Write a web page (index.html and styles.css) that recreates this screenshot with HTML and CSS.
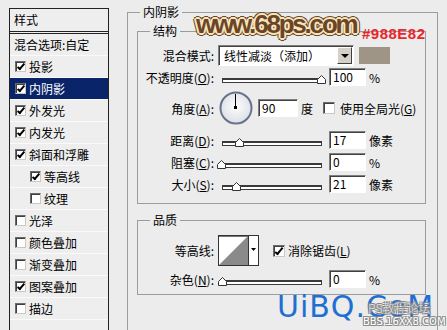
FILE: index.html
```html
<!DOCTYPE html>
<html lang="zh-CN">
<head>
    <meta charset="UTF-8">
    <title>图层样式 - 内阴影</title>
    <link rel="stylesheet" href="styles.css">
</head>
<body>
<div class="dialog">
    <div class="style-list">
        <div class="list-head">样式</div>
        <div class="list-item blend">混合选项:自定</div>
        <div class="list-item"><span class="chk on"></span>投影</div>
        <div class="list-item active"><span class="chk on"></span>内阴影</div>
        <div class="list-item"><span class="chk on"></span>外发光</div>
        <div class="list-item"><span class="chk on"></span>内发光</div>
        <div class="list-item"><span class="chk on"></span>斜面和浮雕</div>
        <div class="list-item sub"><span class="chk on"></span>等高线</div>
        <div class="list-item sub"><span class="chk"></span>纹理</div>
        <div class="list-item"><span class="chk"></span>光泽</div>
        <div class="list-item"><span class="chk"></span>颜色叠加</div>
        <div class="list-item"><span class="chk"></span>渐变叠加</div>
        <div class="list-item"><span class="chk on"></span>图案叠加</div>
        <div class="list-item"><span class="chk"></span>描边</div>
    </div>

    <div class="settings">
        <fieldset class="group outer">
            <legend>内阴影</legend>

            <fieldset class="group struct">
                <legend>结构</legend>
                <div class="row mode">
                    <span class="lbl">混合模式:</span>
                    <div class="select">
                        <span class="select-text">线性减淡（添加）</span>
                        <span class="select-btn"></span>
                    </div>
                    <span class="swatch"></span>
                </div>
                <div class="row opacity">
                    <span class="lbl">不透明度(<u>O</u>):</span>
                    <div class="slider">
                        <div class="track"></div>
                        <svg class="thumb" style="left: 95px" width="9" height="9" viewBox="0 0 9 9"><polygon points="0.5,8.5 0.5,4.5 4.5,0.5 8.5,4.5 8.5,8.5" fill="#fff" stroke="#333"/></svg>
                    </div>
                    <span class="field">100</span>
                    <span class="unit">%</span>
                </div>
                <div class="row angle">
                    <span class="lbl">角度(<u>A</u>):</span>
                    <svg class="dial" width="34" height="34" viewBox="0 0 34 34">
                        <defs>
                            <radialGradient id="dialFill" cx="50%" cy="45%" r="55%">
                                <stop offset="0" stop-color="#fdfdfd"/>
                                <stop offset="1" stop-color="#dcdfe5"/>
                            </radialGradient>
                        </defs>
                        <circle cx="17" cy="17" r="15.5" fill="url(#dialFill)" stroke="#66738a" stroke-width="2"/>
                        <line x1="16.5" y1="3" x2="16.5" y2="17" stroke="#000"/>
                        <rect x="15" y="15" width="3" height="3" fill="#000"/>
                    </svg>
                    <span class="field">90</span>
                    <span class="unit">度</span>
                    <span class="chk big global"></span>
                    <span class="chk-label">使用全局光(<u>G</u>)</span>
                </div>
                <div class="row">
                    <span class="lbl">距离(<u>D</u>):</span>
                    <div class="slider">
                        <div class="track"></div>
                        <svg class="thumb" style="left: 13px" width="9" height="9" viewBox="0 0 9 9"><polygon points="0.5,8.5 0.5,4.5 4.5,0.5 8.5,4.5 8.5,8.5" fill="#fff" stroke="#333"/></svg>
                    </div>
                    <span class="field">17</span>
                    <span class="unit">像素</span>
                </div>
                <div class="row">
                    <span class="lbl">阻塞(<u>C</u>):</span>
                    <div class="slider">
                        <div class="track"></div>
                        <svg class="thumb" style="left: -5px" width="9" height="9" viewBox="0 0 9 9"><polygon points="0.5,8.5 0.5,4.5 4.5,0.5 8.5,4.5 8.5,8.5" fill="#fff" stroke="#333"/></svg>
                    </div>
                    <span class="field">0</span>
                    <span class="unit">%</span>
                </div>
                <div class="row">
                    <span class="lbl">大小(<u>S</u>):</span>
                    <div class="slider">
                        <div class="track"></div>
                        <svg class="thumb" style="left: 10px" width="9" height="9" viewBox="0 0 9 9"><polygon points="0.5,8.5 0.5,4.5 4.5,0.5 8.5,4.5 8.5,8.5" fill="#fff" stroke="#333"/></svg>
                    </div>
                    <span class="field">21</span>
                    <span class="unit">像素</span>
                </div>
            </fieldset>

            <fieldset class="group quality">
                <legend>品质</legend>
                <div class="row contour-row">
                    <span class="lbl">等高线:</span>
                    <svg class="contour" width="41" height="31" viewBox="0 0 41 31">
                        <rect x="0.5" y="0.5" width="30" height="30" fill="#fff" stroke="#333"/>
                        <line x1="1" y1="1.5" x2="30" y2="1.5" stroke="#777"/>
                        <polygon points="1,30 30,1 30,30" fill="#8a8a8a"/>
                        <rect x="30.5" y="0.5" width="10" height="30" fill="#fff" stroke="#333"/>
                        <polygon points="33,13 38,13 35.5,16" fill="#000"/>
                    </svg>
                    <span class="chk big on aa"></span>
                    <span class="chk-label">消除锯齿(<u>L</u>)</span>
                </div>
                <div class="row">
                    <span class="lbl">杂色(<u>N</u>):</span>
                    <div class="slider">
                        <div class="track"></div>
                        <svg class="thumb" style="left: -4px" width="9" height="9" viewBox="0 0 9 9"><polygon points="0.5,8.5 0.5,4.5 4.5,0.5 8.5,4.5 8.5,8.5" fill="#fff" stroke="#333"/></svg>
                    </div>
                    <span class="field">0</span>
                    <span class="unit">%</span>
                </div>
            </fieldset>
        </fieldset>
    </div>

    <!-- 水印 -->
    <div class="mark mark-68">www.68ps.com</div>
    <div class="mark mark-hex">#988E82</div>
    <div class="mark mark-uibq">UiBQ.CoM</div>
    <div class="mark mark-bbs">PS教程论坛</div>
    <div class="mark mark-bbs-url">BBS.16XX8.COM</div>
</div>
</body>
</html>
```

FILE: styles.css
```css
body {
    margin: 0;
    background-color: #ececec;
    font-family: "Noto Sans CJK SC", "Liberation Sans", sans-serif;
    font-size: 12px;
    color: #000;
    overflow: hidden;
}
.dialog {
    position: relative;
    display: flex;
    align-items: flex-start;
    height: 330px;
    padding: 5px 0 0 9px;
    box-sizing: border-box;
    overflow: hidden;
}

/* 左侧样式列表 */
.style-list {
    width: 100px;
    height: 340px;
    margin-top: 3px;
    border: 1px solid #222;
    box-sizing: border-box;
    background-color: #eeeeee;
    flex-shrink: 0;
}
.list-head {
    height: 22px;
    line-height: 22px;
    padding-left: 4px;
    border-bottom: 3px double #222;
}
.list-item {
    display: flex;
    align-items: center;
    height: 21px;
    padding-left: 5px;
    border-bottom: 1px solid #fafafa;
    white-space: nowrap;
}
.list-item.blend {
    padding-left: 4px;
}
.list-item.sub {
    padding-left: 20px;
}
.list-item.active {
    background-color: #0a246a;
    color: #fff;
}

/* 复选框 */
.chk {
    position: relative;
    width: 11px;
    height: 11px;
    box-sizing: border-box;
    border: 1px solid;
    border-color: #6a6a6a #c8c8c8 #c8c8c8 #6a6a6a;
    box-shadow: inset 1px 1px 0 #404040;
    background-color: #fff;
    margin-right: 3px;
    flex-shrink: 0;
}
.chk.on::after {
    content: "";
    position: absolute;
    left: 3px;
    top: 0;
    width: 2px;
    height: 6px;
    border: solid #000;
    border-width: 0 2px 2px 0;
    transform: rotate(40deg);
}
.chk.big {
    width: 12px;
    height: 12px;
}
.chk.big.on::after {
    left: 3px;
    top: 0;
    height: 7px;
}
.chk.global {
    margin-left: 10px;
    margin-right: 5px;
}
.chk.aa {
    margin-left: 14px;
    margin-right: 3px;
}

/* 右侧设置 */
.settings {
    margin-left: 18px;
}
.group {
    margin: 0;
    padding: 0;
    min-width: 0;
    border: 1px solid #9c9c9c;
}
.group legend {
    padding: 0 3px;
    margin-left: 12px;
    line-height: 14px;
}
.group.outer {
    width: 311px;
    height: 345px;
    padding: 0 11px 0 9px;
    box-sizing: border-box;
}
.group.outer > legend {
    margin-left: 3px;
}
.group.struct {
    margin-top: 5px;
    padding: 6px 0 10px;
}
.group.quality {
    margin-top: 9px;
    padding: 8px 0 6px;
}

.row {
    display: flex;
    align-items: center;
    height: 18px;
    margin-bottom: 4px;
    white-space: nowrap;
}
.row:last-child {
    margin-bottom: 0;
}
.row.mode {
    height: 22px;
    margin-bottom: 2px;
}
.row.opacity {
    margin-bottom: 5px;
}
.row.angle {
    height: 34px;
    margin-bottom: 6px;
}
.row.contour-row {
    height: 31px;
    margin-bottom: 4px;
}
.lbl {
    width: 76px;
    margin-right: 4px;
    text-align: right;
    flex-shrink: 0;
}

/* 下拉框 */
.select {
    display: flex;
    align-items: center;
    width: 136px;
    height: 21px;
    box-sizing: border-box;
    border: 1px solid;
    border-color: #808080 #fff #fff #808080;
    box-shadow: inset 1px 1px 0 #404040;
    background-color: #fff;
}
.select-text {
    flex: 1;
    padding-left: 5px;
}
.select-btn {
    display: flex;
    align-items: center;
    justify-content: center;
    width: 15px;
    height: 17px;
    margin: 1px 1px 0 0;
    box-sizing: border-box;
    border: 1px solid;
    border-color: #fff #404040 #404040 #fff;
    background-color: #d4d0c8;
}
.select-btn::after {
    content: "";
    border-left: 4px solid transparent;
    border-right: 4px solid transparent;
    border-top: 4px solid #000;
}
.swatch {
    width: 31px;
    height: 17px;
    margin-left: 5px;
    background-color: #9f9586;
}

/* 滑块和输入框 */
.slider {
    position: relative;
    align-self: flex-start;
    width: 100px;
    height: 9px;
    margin: 7px 0 0 4px;
}
.track {
    height: 5px;
    margin-top: 3px;
    box-sizing: border-box;
    border: 1px solid #3a3a3a;
    border-top-width: 2px;
    background-color: #fff;
}
.thumb {
    position: absolute;
    top: 0;
}
.field {
    width: 37px;
    height: 18px;
    margin-left: 7px;
    padding-left: 3px;
    box-sizing: border-box;
    border: 1px solid;
    border-color: #808080 #fff #fff #808080;
    box-shadow: inset 1px 1px 0 #404040;
    background-color: #fff;
    line-height: 16px;
}
.angle .field {
    width: 40px;
    margin-left: 5px;
}
.unit {
    margin-left: 3px;
}
.dial {
    margin-left: 1px;
}

/* 水印 */
.mark {
    position: absolute;
    white-space: nowrap;
}
.mark-68 {
    left: 196px;
    top: 11px;
    font: bold 26px/26px "Liberation Sans", sans-serif;
    letter-spacing: -2.2px;
    color: #6b4525;
    text-shadow:
        -1px -1px 0 #f6e5bf, 1px -1px 0 #f6e5bf, -1px 1px 0 #f6e5bf, 1px 1px 0 #f6e5bf,
        0 -2px 0 #f6e5bf, 0 2px 0 #f6e5bf, -2px 0 0 #f6e5bf, 2px 0 0 #f6e5bf,
        -3px 0 0 #6b4525, 3px 0 0 #6b4525, 0 -3px 0 #6b4525, 0 3px 0 #6b4525,
        -2px -2px 0 #6b4525, 2px -2px 0 #6b4525, -2px 2px 0 #6b4525, 2px 2px 0 #6b4525;
}
.mark-hex {
    left: 362px;
    top: 26px;
    font: bold 15px/15px "Liberation Sans", sans-serif;
    letter-spacing: 0.5px;
    color: #e8262d;
}
.mark-uibq {
    left: 277px;
    top: 292px;
    font: 30px/30px "DejaVu Sans", sans-serif;
    letter-spacing: 1px;
    color: #1e6fd3;
}
.mark-bbs {
    left: 368px;
    top: 301px;
    font-size: 12px;
    line-height: 14px;
    color: rgba(255, 255, 255, 0.6);
    text-shadow: 1px 1px 0 #888, -1px -1px 0 #888, 1px -1px 0 #888, -1px 1px 0 #888;
}
.mark-bbs-url {
    left: 363px;
    top: 316px;
    font: 10px/11px "DejaVu Sans", sans-serif;
    color: #fff;
    text-shadow: 1px 1px 0 #888, -1px -1px 0 #888, 1px -1px 0 #888, -1px 1px 0 #888;
}
```
